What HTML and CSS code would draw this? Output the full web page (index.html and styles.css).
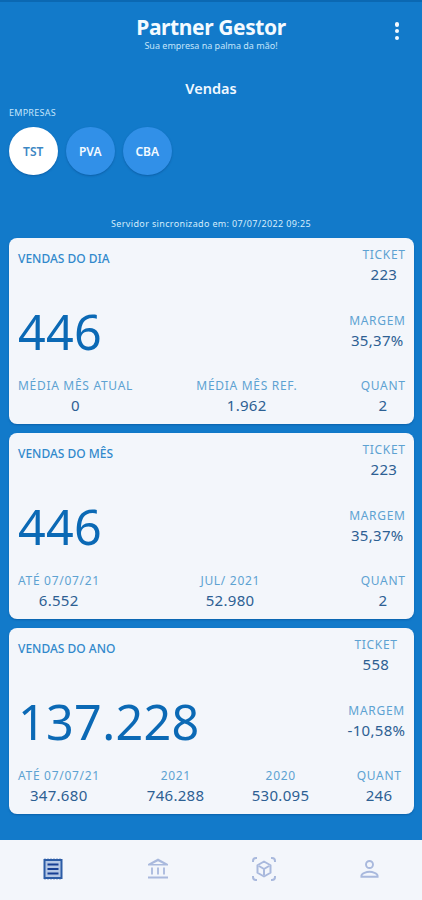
FILE: index.html
```
<!DOCTYPE html>
<html lang="pt-BR">
<head>
<meta charset="utf-8">
<title>Partner Gestor</title>
<link rel="stylesheet" href="styles.css">
</head>
<body>
<div class="app">
  <header class="header">
    <div class="brand">
      <h1>Partner Gestor</h1>
      <p>Sua empresa na palma da mão!</p>
    </div>
    <button class="more" aria-label="Menu"><i></i><i></i><i></i></button>
  </header>
  <h2 class="page-title">Vendas</h2>
  <div class="section-label">EMPRESAS</div>
  <div class="companies">
    <button class="company active">TST</button>
    <button class="company">PVA</button>
    <button class="company">CBA</button>
  </div>
  <div class="sync">Servidor sincronizado em: 07/07/2022 09:25</div>
  <main class="cards">
    <section class="card">
      <div class="row"><h3>VENDAS DO DIA</h3><div class="stat"><span>TICKET</span><b>223</b></div></div>
      <div class="row"><strong class="total">446</strong><div class="stat margin"><span>MARGEM</span><b>35,37%</b></div></div>
      <div class="row"><div class="stat"><span>MÉDIA MÊS ATUAL</span><b>0</b></div><div class="stat"><span>MÉDIA MÊS REF.</span><b>1.962</b></div><div class="stat"><span>QUANT</span><b>2</b></div></div>
    </section>
    <section class="card">
      <div class="row"><h3>VENDAS DO MÊS</h3><div class="stat"><span>TICKET</span><b>223</b></div></div>
      <div class="row"><strong class="total">446</strong><div class="stat margin"><span>MARGEM</span><b>35,37%</b></div></div>
      <div class="row"><div class="stat"><span>ATÉ 07/07/21</span><b>6.552</b></div><div class="stat"><span>JUL/ 2021</span><b>52.980</b></div><div class="stat"><span>QUANT</span><b>2</b></div></div>
    </section>
    <section class="card year">
      <div class="row"><h3>VENDAS DO ANO</h3><div class="stat ticket"><span>TICKET</span><b>558</b></div></div>
      <div class="row"><strong class="total">137.228</strong><div class="stat margin"><span>MARGEM</span><b>-10,58%</b></div></div>
      <div class="row last"><div class="stat"><span>ATÉ 07/07/21</span><b>347.680</b></div><div class="stat"><span>2021</span><b>746.288</b></div><div class="stat"><span>2020</span><b>530.095</b></div><div class="stat"><span>QUANT</span><b>246</b></div></div>
    </section>
  </main>
  <nav class="tabs">
    <a class="tab selected"><svg viewBox="0 0 24 24"><rect x="3.500" y="3" width="17" height="18" fill="#b4c7e5" stroke="#2c5ca6" stroke-width="2"/><path d="M3 2.500h18M3 21.500h18" stroke="#2c5ca6" stroke-width="1.500" stroke-dasharray="2 1"/><path d="M6.500 7.500h11M6.500 12h11M6.500 16.500h11" stroke="#173f94" stroke-width="1.800"/></svg></a>
    <a class="tab"><svg viewBox="0 0 24 24"><path d="M2 8.500V7l10-5.500L22 7v1.500zM6.500 7h11L12 4.200z" fill="currentColor" fill-rule="evenodd"/><path d="M6 10.500v7M12 10.500v7M18 10.500v7" stroke="currentColor" stroke-width="1.800"/><path d="M2 20.500h20" stroke="currentColor" stroke-width="2"/></svg></a>
    <a class="tab"><svg viewBox="0 0 24 24" fill="none" stroke="currentColor" stroke-width="2" stroke-linejoin="round"><path d="M1 5V4a3 3 0 0 1 3-3h1M19 1h1a3 3 0 0 1 3 3v1M23 19v1a3 3 0 0 1-3 3h-1M5 23H4a3 3 0 0 1-3-3v-1M12 4.500l6.500 3.750v7.500L12 19.500l-6.500-3.750v-7.500zM7 9l5 3 5-3M12 12v6"/></svg></a>
    <a class="tab"><svg viewBox="0 0 24 24" fill="none" stroke="currentColor" stroke-width="1.900"><circle cx="12.500" cy="7.500" r="3.500"/><path d="M4.400 19.800v-1.100c0-2.600 5.400-3.900 8.100-3.900s8.100 1.300 8.100 3.900v1.100z"/></svg></a>
  </nav>
</div>
</body>
</html>
```
FILE: styles.css
```
* { box-sizing: border-box; }
body { margin: 0; font-family: "Noto Sans", sans-serif; }
h1, h2, h3, p { margin: 0; }
button { border: 0; padding: 0; font-family: inherit; }
.app {
  width: 422px;
  height: 900px;
  display: flex;
  flex-direction: column;
  background: #127aca;
  border-top: 2px solid #0b68b2;
  white-space: nowrap;
}
.header {
  height: 58px;
  padding-top: 12px;
  display: grid;
  grid-template-columns: 50px 1fr 50px;
  color: #f4faff;
}
.brand { grid-column: 2; text-align: center; }
.brand h1 { font-size: 21px; line-height: 26px; font-weight: 700; letter-spacing: -.4px; }
.brand p { font-size: 9px; line-height: 11px; color: #c5e5fa; }
.more {
  height: 18px;
  margin: 8px 0 0;
  display: flex;
  flex-direction: column;
  justify-content: space-between;
  align-items: center;
  background: none;
}
.more i { width: 4.500px; height: 4.500px; border-radius: 50%; background: #f4faff; }
.page-title { margin-top: 17px; text-align: center; font-size: 14.500px; line-height: 22px; font-weight: 600; color: #f0f8ff; }
.section-label { margin: 7px 0 0 9px; font-size: 9px; line-height: 14px; letter-spacing: .25px; color: #c5e5fa; }
.companies { margin: 7px 0 0 9px; display: flex; gap: 8.500px; }
.company {
  width: 48.500px;
  height: 48px;
  border-radius: 50%;
  background: #3190e8;
  color: #f4faff;
  font-size: 12px;
  font-weight: 600;
  box-shadow: 0 1px 2px rgba(0, 50, 110, .35);
}
.company.active { background: #fff; color: #3c87c4; }
.sync { margin-top: 42px; text-align: center; font-size: 9px; line-height: 14px; letter-spacing: .35px; color: #d5edfc; }
.cards { margin: 7px 9px 0; width: 405px; display: grid; gap: 9px; }
.card {
  height: 186px;
  padding: 8px 9px 0;
  border-radius: 8px;
  background: #f3f6fb;
  box-shadow: 0 1px 2px #0a61ab;
}
.row { height: 65.700px; display: flex; justify-content: space-between; }
.card h3 { margin-top: 4px; font-size: 12px; line-height: 17px; font-weight: 500; color: #3189cc; }
.total { margin-top: -12px; font-size: 48.500px; line-height: 62px; font-weight: 400; letter-spacing: .3px; color: #0b69b5; }
.stat { display: flex; flex-direction: column; align-items: center; }
.stat span { margin-right: -.7px; font-size: 12px; line-height: 18px; letter-spacing: .7px; color: #5da2d2; }
.stat b { margin-right: -.3px; font-size: 15px; line-height: 21px; font-weight: 400; letter-spacing: .3px; color: #2d6093; }
.year .ticket { margin-right: 8px; }
.year .last { padding-right: 4px; }
.tabs {
  margin-top: auto;
  height: 60px;
  display: grid;
  grid-template-columns: repeat(4, 1fr);
  background: #f3f6fb;
  color: #a9b9dd;
}
.tab { display: grid; place-items: center; }
.tab svg { width: 24px; height: 24px; margin-top: -2px; }
```
